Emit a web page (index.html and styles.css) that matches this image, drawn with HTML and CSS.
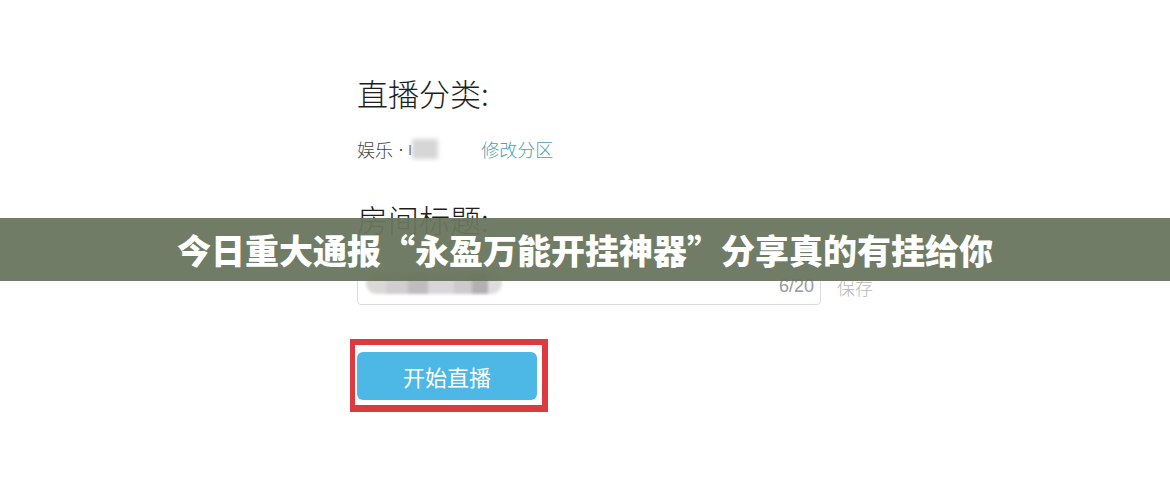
FILE: index.html
```html
<!DOCTYPE html>
<html lang="zh-CN">
<head>
<meta charset="utf-8">
<link rel="stylesheet" href="styles.css">
</head>
<body>
<div class="page">
  <div class="form">
    <div class="label first">直播分类:</div>
    <div class="cat-row">
      <span class="cat">娱乐</span><span class="dot">·</span><span class="cat-i">I</span><span class="blur-box"></span>
      <span class="link">修改分区</span>
    </div>
    <div class="label second">房间标题:</div>
    <div class="title-row">
      <div class="input">
        <div class="blur-text">
          <span class="px p1"></span><span class="px p2"></span><span class="px p3"></span><span class="px p4"></span><span class="px p5"></span><span class="px p6"></span><span class="px p7"></span>
        </div>
        <span class="count">6/20</span>
      </div>
      <span class="save">保存</span>
    </div>
    <div class="btn-frame">
      <div class="btn">开始直播</div>
    </div>
  </div>
  <div class="banner">今日重大通报“永盈万能开挂神器”分享真的有挂给你</div>
</div>
</body>
</html>
```
FILE: styles.css
```css
html, body {
  margin: 0;
  padding: 0;
  background: #ffffff;
}
body {
  font-family: "Noto Sans CJK SC", "Noto Sans", sans-serif;
  width: 1170px;
  height: 500px;
  overflow: hidden;
}
.page {
  position: relative;
  width: 1170px;
  height: 500px;
}
.form {
  padding-left: 357px;
  padding-top: 76px;
  display: flex;
  flex-direction: column;
  align-items: flex-start;
}
.label {
  font-size: 31px;
  line-height: 34px;
  font-weight: 300;
  color: #1e1e1e;
}
.cat-row {
  margin-top: 26px;
  display: flex;
  align-items: center;
  height: 26px;
  font-size: 18px;
  font-weight: 300;
  color: #444;
}
.dot {
  font-family: "Liberation Sans", sans-serif;
  margin: 0 4px 0 5px;
}
.cat-i {
  font-family: "Liberation Sans", sans-serif;
  font-size: 15px;
  color: #666;
}
.blur-box {
  display: inline-block;
  width: 26px;
  height: 20px;
  background: #d6d6d6;
  filter: blur(2px);
}
.link {
  color: #4d9fb5;
  margin-left: 43px;
}
.second {
  margin-top: 40px;
}
.title-row {
  margin-top: 25px;
  display: flex;
  align-items: center;
}
.input {
  width: 448px;
  height: 42px;
  border: 1px solid #dcdcdc;
  border-radius: 4px;
  display: flex;
  align-items: center;
  justify-content: space-between;
  padding: 0 6px 0 8px;
}
.blur-text {
  display: flex;
  height: 22px;
  filter: blur(1.5px);
  border-radius: 11px;
  overflow: hidden;
}
.px {
  display: block;
  height: 22px;
}
.p1 { width: 20px; background: #dcd8d8; }
.p2 { width: 22px; background: #d0ced0; }
.p3 { width: 20px; background: #bebcbe; }
.p4 { width: 26px; background: #d8d6da; }
.p5 { width: 18px; background: #cccacd; }
.p6 { width: 16px; background: #b2b0b2; }
.p7 { width: 14px; background: #dedce0; }
.count {
  font-family: "Liberation Sans", "Noto Sans", sans-serif;
  font-size: 18px;
  color: #9a9a9a;
  padding-top: 6px;
}
.save {
  margin-left: 16px;
  padding-top: 8px;
  font-size: 18px;
  font-weight: 300;
  color: #b8b8b8;
}
.btn-frame {
  margin-top: 34px;
  margin-left: -7px;
  border-style: solid;
  border-color: #dc3a3f;
  border-width: 6px 6px 7px 5px;
  padding: 7px 5px 5px 2px;
  background: #ffffff;
}
.btn {
  width: 180px;
  height: 48px;
  border-radius: 6px;
  background: #4db7e5;
  color: #ffffff;
  font-size: 22px;
  font-weight: 400;
  line-height: 48px;
  text-align: center;
}
.banner {
  position: absolute;
  left: 0;
  top: 218px;
  width: 1170px;
  height: 63px;
  background: rgba(104, 117, 93, 0.95);
  color: #ffffff;
  font-size: 34px;
  font-weight: 900;
  line-height: 63px;
  text-align: center;
  white-space: nowrap;
}
```
